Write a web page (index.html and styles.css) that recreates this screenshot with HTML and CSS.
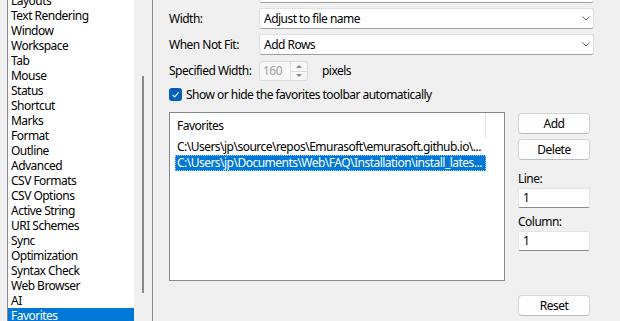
FILE: index.html
```html
<!DOCTYPE html>
<html lang="en">
<head>
    <meta charset="UTF-8">
    <title>Customize - Favorites</title>
    <link rel="stylesheet" href="styles.css">
</head>
<body>
<div class="dialog">
    <div class="category-box">
        <ul class="categories">
            <li>Layouts</li>
            <li>Text Rendering</li>
            <li>Window</li>
            <li>Workspace</li>
            <li>Tab</li>
            <li>Mouse</li>
            <li>Status</li>
            <li>Shortcut</li>
            <li>Marks</li>
            <li>Format</li>
            <li>Outline</li>
            <li>Advanced</li>
            <li>CSV Formats</li>
            <li>CSV Options</li>
            <li>Active String</li>
            <li>URI Schemes</li>
            <li>Sync</li>
            <li>Optimization</li>
            <li>Syntax Check</li>
            <li>Web Browser</li>
            <li>AI</li>
            <li class="selected">Favorites</li>
        </ul>
        <div class="scroll-track"><div class="scroll-thumb"></div></div>
    </div>

    <div class="page">
        <div class="form-grid">
            <span></span>
            <div class="combo"></div>

            <label>Width:</label>
            <div class="combo">
                <span>Adjust to file name</span>
                <svg class="chevron" width="8" height="5" viewBox="0 0 8 5"><polyline points="0.5,0.5 4,4 7.5,0.5" fill="none" stroke="#5f5f5f" stroke-width="1"/></svg>
            </div>

            <label>When Not Fit:</label>
            <div class="combo">
                <span>Add Rows</span>
                <svg class="chevron" width="8" height="5" viewBox="0 0 8 5"><polyline points="0.5,0.5 4,4 7.5,0.5" fill="none" stroke="#5f5f5f" stroke-width="1"/></svg>
            </div>

            <label>Specified Width:</label>
            <div class="spin-row">
                <div class="spin disabled">
                    <span class="spin-value">160</span>
                    <div class="spin-buttons">
                        <div class="spin-btn"><i class="arrow-up"></i></div>
                        <div class="spin-btn"><i class="arrow-down"></i></div>
                    </div>
                </div>
                <span class="unit">pixels</span>
            </div>
        </div>

        <div class="check-row">
            <span class="checkbox">
                <svg width="13" height="13" viewBox="0 0 13 13"><polyline points="3.5,6.8 5.6,8.9 9.6,4.4" fill="none" stroke="#fff" stroke-width="1.1"/></svg>
            </span>
            <span>Show or hide the favorites toolbar automatically</span>
        </div>

        <div class="favorites">
            <div class="listview">
                <div class="lv-header"><div class="lv-col">Favorites</div></div>
                <div class="lv-row">C:\Users\jp\source\repos\Emurasoft\emurasoft.github.io\...</div>
                <div class="lv-row selected">C:\Users\jp\Documents\Web\FAQ\Installation\install_lates...</div>
            </div>
            <div class="side-buttons">
                <button class="btn">Add</button>
                <button class="btn">Delete</button>
                <label class="field-label">Line:</label>
                <div class="edit">1</div>
                <label class="field-label">Column:</label>
                <div class="edit">1</div>
                <button class="btn reset">Reset</button>
            </div>
        </div>
    </div>
</div>
</body>
</html>
```

FILE: styles.css
```css
html, body {
    margin: 0;
    padding: 0;
}
body {
    font-family: 'Noto Sans', 'Segoe UI', sans-serif;
    font-size: 12px;
    letter-spacing: -0.52px;
    color: #000;
    background-color: #f0f0f0;
    width: 620px;
    height: 321px;
    overflow: hidden;
    white-space: nowrap;
}
.dialog {
    display: flex;
    height: 321px;
}

/* left category list */
.category-box {
    display: flex;
    margin-left: 7px;
    border-left: 1px solid #828790;
    border-right: 1px solid #828790;
    height: 321px;
    overflow: hidden;
}
.categories {
    list-style: none;
    margin: -7px 0 0 0;
    padding: 0;
    width: 126px;
    background-color: #fff;
}
.categories li {
    height: 15px;
    line-height: 15px;
    padding-left: 3px;
}
.categories li.selected {
    background-color: #0078d7;
    color: #fff;
}
.scroll-track {
    width: 18px;
    padding-top: 76px;
    background-color: #f0f0f0;
}
.scroll-thumb {
    width: 2px;
    height: 217px;
    margin-left: 8px;
    background-color: #8a8a8a;
}

/* right page */
.page {
    padding-left: 16px;
}
.form-grid {
    display: grid;
    grid-template-columns: 90px 335px;
    grid-auto-rows: 21px;
    row-gap: 5px;
    margin-top: -18px;
}
.form-grid label {
    align-self: center;
    line-height: 15px;
}
.combo {
    box-sizing: border-box;
    display: flex;
    align-items: center;
    justify-content: space-between;
    padding: 0 4px 0 4px;
    background-color: #fff;
    border: 1px solid #e0e0e0;
    border-bottom-color: #a0a0a0;
    border-radius: 3px;
}
.chevron {
    margin-right: -1px;
}
.spin-row {
    display: flex;
    align-items: center;
}
.spin {
    box-sizing: border-box;
    display: flex;
    height: 20px;
    margin-top: 1px;
    border: 1px solid #dadada;
    border-radius: 3px;
    background-color: #f7f7f7;
}
.spin-value {
    width: 27px;
    padding-left: 3px;
    line-height: 18px;
    color: #a0a0a0;
}
.spin-buttons {
    display: flex;
    flex-direction: column;
    width: 16px;
    border-left: 1px solid #dadada;
}
.spin-btn {
    flex: 1;
    display: flex;
    align-items: center;
    justify-content: center;
}
.spin-btn + .spin-btn {
    border-top: 1px solid #dadada;
}
.arrow-up, .arrow-down {
    width: 0;
    height: 0;
    border-left: 3px solid transparent;
    border-right: 3px solid transparent;
}
.arrow-up {
    border-bottom: 3px solid #8a8a8a;
}
.arrow-down {
    border-top: 3px solid #8a8a8a;
}
.unit {
    margin-left: 14px;
}

.check-row {
    display: flex;
    align-items: center;
    height: 15px;
    margin-top: 6px;
}
.checkbox {
    width: 13px;
    height: 13px;
    border-radius: 3px;
    background-color: #005fb8;
    margin-right: 4px;
    display: flex;
}

/* favorites list and buttons */
.favorites {
    display: flex;
    margin-top: 10px;
}
.listview {
    box-sizing: border-box;
    width: 336px;
    height: 169px;
    border: 1px solid #828790;
    background-color: #fff;
}
.lv-header {
    height: 26px;
    display: flex;
}
.lv-col {
    box-sizing: border-box;
    width: 316px;
    padding-left: 7px;
    line-height: 26px;
    border-right: 1px solid #e5e5e5;
}
.lv-row {
    box-sizing: border-box;
    width: 311px;
    height: 16px;
    line-height: 16px;
    margin-left: 5px;
    padding-left: 2px;
    overflow: hidden;
}
.lv-row.selected {
    background-color: #0078d7;
    color: #fff;
    outline: 1px dotted #9cc8ee;
    outline-offset: -1px;
}
.side-buttons {
    display: flex;
    flex-direction: column;
    width: 72px;
    margin-left: 13px;
    padding-top: 1px;
}
.btn {
    box-sizing: border-box;
    height: 21px;
    margin-bottom: 5px;
    padding: 0;
    font-family: inherit;
    font-size: 12px;
    letter-spacing: -0.52px;
    color: #000;
    background-color: #fdfdfd;
    border: 1px solid #d6d6d6;
    border-bottom-color: #bcbcbc;
    border-radius: 4px;
}
.field-label {
    line-height: 16px;
    margin-top: 6px;
    margin-bottom: 1px;
}
.edit {
    box-sizing: border-box;
    height: 20px;
    line-height: 18px;
    padding-left: 4px;
    background-color: #fff;
    border: 1px solid #e5e5e5;
    border-bottom-color: #8a8a8a;
    border-radius: 2px;
}
.btn.reset {
    margin-top: 44px;
}
```
